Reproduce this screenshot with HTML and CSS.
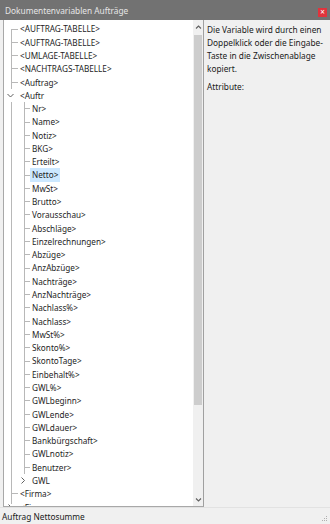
FILE: index.html
```html
<!DOCTYPE html>
<html lang="de">
<head>
<meta charset="utf-8">
<link rel="stylesheet" href="styles.css">
</head>
<body>
<div class="window">
  <div class="titlebar">
    <span class="title">Dokumentenvariablen Aufträge</span>
    <span class="close">×</span>
  </div>
  <div class="main">
    <div class="treepane">
      <div class="tree">
        <div class="row"><span class="g a f"></span><span class="txt top">&lt;AUFTRAG-TABELLE&gt;</span></div>
        <div class="row"><span class="g a t"></span><span class="txt top">&lt;AUFTRAG-TABELLE&gt;</span></div>
        <div class="row"><span class="g a t"></span><span class="txt top">&lt;UMLAGE-TABELLE&gt;</span></div>
        <div class="row"><span class="g a t"></span><span class="txt top">&lt;NACHTRAGS-TABELLE&gt;</span></div>
        <div class="row"><span class="g a t"></span><span class="txt top">&lt;Auftrag&gt;</span></div>
        <div class="row"><span class="g a open"><svg width="14" height="13" viewBox="0 0 14 13"><polyline points="3.5,5 6.5,8 9.5,5" fill="none" stroke="#606060" stroke-width="1"/></svg></span><span class="txt top">&lt;Auftr</span></div>
        <div class="row"><span class="g a v"></span><span class="g b f"></span><span class="txt">Nr&gt;</span></div>
        <div class="row"><span class="g a v"></span><span class="g b t"></span><span class="txt">Name&gt;</span></div>
        <div class="row"><span class="g a v"></span><span class="g b t"></span><span class="txt">Notiz&gt;</span></div>
        <div class="row"><span class="g a v"></span><span class="g b t"></span><span class="txt">BKG&gt;</span></div>
        <div class="row"><span class="g a v"></span><span class="g b t"></span><span class="txt">Erteilt&gt;</span></div>
        <div class="row"><span class="g a v"></span><span class="g b t"></span><span class="txt sel">Netto&gt;</span></div>
        <div class="row"><span class="g a v"></span><span class="g b t"></span><span class="txt">MwSt&gt;</span></div>
        <div class="row"><span class="g a v"></span><span class="g b t"></span><span class="txt">Brutto&gt;</span></div>
        <div class="row"><span class="g a v"></span><span class="g b t"></span><span class="txt">Vorausschau&gt;</span></div>
        <div class="row"><span class="g a v"></span><span class="g b t"></span><span class="txt">Abschläge&gt;</span></div>
        <div class="row"><span class="g a v"></span><span class="g b t"></span><span class="txt">Einzelrechnungen&gt;</span></div>
        <div class="row"><span class="g a v"></span><span class="g b t"></span><span class="txt">Abzüge&gt;</span></div>
        <div class="row"><span class="g a v"></span><span class="g b t"></span><span class="txt">AnzAbzüge&gt;</span></div>
        <div class="row"><span class="g a v"></span><span class="g b t"></span><span class="txt">Nachträge&gt;</span></div>
        <div class="row"><span class="g a v"></span><span class="g b t"></span><span class="txt">AnzNachträge&gt;</span></div>
        <div class="row"><span class="g a v"></span><span class="g b t"></span><span class="txt">Nachlass%&gt;</span></div>
        <div class="row"><span class="g a v"></span><span class="g b t"></span><span class="txt">Nachlass&gt;</span></div>
        <div class="row"><span class="g a v"></span><span class="g b t"></span><span class="txt">MwSt%&gt;</span></div>
        <div class="row"><span class="g a v"></span><span class="g b t"></span><span class="txt">Skonto%&gt;</span></div>
        <div class="row"><span class="g a v"></span><span class="g b t"></span><span class="txt">SkontoTage&gt;</span></div>
        <div class="row"><span class="g a v"></span><span class="g b t"></span><span class="txt">Einbehalt%&gt;</span></div>
        <div class="row"><span class="g a v"></span><span class="g b t"></span><span class="txt">GWL%&gt;</span></div>
        <div class="row"><span class="g a v"></span><span class="g b t"></span><span class="txt">GWLbeginn&gt;</span></div>
        <div class="row"><span class="g a v"></span><span class="g b t"></span><span class="txt">GWLende&gt;</span></div>
        <div class="row"><span class="g a v"></span><span class="g b t"></span><span class="txt">GWLdauer&gt;</span></div>
        <div class="row"><span class="g a v"></span><span class="g b t"></span><span class="txt">Bankbürgschaft&gt;</span></div>
        <div class="row"><span class="g a v"></span><span class="g b t"></span><span class="txt">GWLnotiz&gt;</span></div>
        <div class="row"><span class="g a v"></span><span class="g b u"></span><span class="txt">Benutzer&gt;</span></div>
        <div class="row"><span class="g a v"></span><span class="g b closed"><svg width="12" height="13" viewBox="0 0 12 13"><polyline points="3.5,3.5 6.5,6.5 3.5,9.5" fill="none" stroke="#606060" stroke-width="1"/></svg></span><span class="txt">GWL</span></div>
        <div class="row"><span class="g a t"></span><span class="txt top">&lt;Firma&gt;</span></div>
        <div class="row"><span class="g a closed"><svg width="14" height="13" viewBox="0 0 14 13"><polyline points="4.5,3.5 7.5,6.5 4.5,9.5" fill="none" stroke="#606060" stroke-width="1"/></svg></span><span class="txt top">&lt;Firma</span></div>
      </div>
      <div class="scrollbar">
        <div class="arrow"><svg width="9" height="9" viewBox="0 0 9 9"><polyline points="2,5.5 4.5,3 7,5.5" fill="none" stroke="#606060" stroke-width="1.1"/></svg></div>
        <div class="track"><div class="thumb"></div></div>
        <div class="arrow"><svg width="9" height="9" viewBox="0 0 9 9"><polyline points="2,3.5 4.5,6 7,3.5" fill="none" stroke="#606060" stroke-width="1.1"/></svg></div>
      </div>
    </div>
    <div class="info">
      <p class="desc">Die Variable wird durch einen Doppelklick oder die Eingabe-Taste in die Zwischenablage kopiert.</p>
      <p class="attr">Attribute:</p>
    </div>
  </div>
  <div class="status">
    <span class="status-text">Auftrag Nettosumme</span>
    <span class="grip"><svg width="6" height="6" viewBox="0 0 6 6"><rect x="4" y="0" width="1" height="1" fill="#b0b0b0"/><rect x="4" y="2" width="1" height="1" fill="#b0b0b0"/><rect x="2" y="2" width="1" height="1" fill="#b0b0b0"/><rect x="4" y="4" width="1" height="1" fill="#b0b0b0"/><rect x="2" y="4" width="1" height="1" fill="#b0b0b0"/><rect x="0" y="4" width="1" height="1" fill="#b0b0b0"/></svg></span>
  </div>
</div>
</body>
</html>
```

FILE: styles.css
```css
html, body {
  margin: 0;
  padding: 0;
}
body {
  width: 330px;
  height: 524px;
  overflow: hidden;
  background: #f0f0f0;
  font-family: "Noto Sans", "Open Sans", "Liberation Sans", sans-serif;
  font-size: 8.2px;
  color: #1a1a1a;
}
.window {
  display: flex;
  flex-direction: column;
  height: 524px;
}
.titlebar {
  height: 20px;
  background: #727272;
  display: flex;
  align-items: center;
  justify-content: space-between;
  padding: 0 3px 0 5px;
  flex: none;
}
.title {
  color: #e6e6e6;
  font-size: 8.3px;
}
.close {
  width: 9px;
  height: 9px;
  background: #e0333c;
  color: #fff;
  font-size: 8px;
  line-height: 8px;
  text-align: center;
  margin-top: 4px;
}
.main {
  display: flex;
  height: 487px;
  flex: none;
}
.treepane {
  margin-left: 3px;
  width: 199px;
  display: flex;
  background: #fff;
  border-left: 1px solid #a8a8a8;
  border-bottom: 1px solid #a8a8a8;
  border-right: 1px solid #a0a0a0;
  overflow: hidden;
}
.tree {
  flex: 1;
  padding-top: 2.4px;
  overflow: hidden;
}
.row {
  display: flex;
  height: 13.29px;
  line-height: 13.29px;
  white-space: nowrap;
}
.g {
  flex: none;
  height: 13.29px;
  display: flex;
  align-items: center;
}
.g.a { width: 14px; }
.g.b { width: 12px; }
.g svg { display: block; }
.a.v { background: linear-gradient(#b8b8b8, #b8b8b8) 7px 0 / 1px 100% no-repeat; }
.a.t {
  background:
    linear-gradient(#b8b8b8, #b8b8b8) 7px 0 / 1px 100% no-repeat,
    linear-gradient(#b8b8b8, #b8b8b8) 7px 50% / 7px 1px no-repeat;
}
.a.f {
  background:
    linear-gradient(#b8b8b8, #b8b8b8) 7px 100% / 1px 50% no-repeat,
    linear-gradient(#b8b8b8, #b8b8b8) 7px 50% / 7px 1px no-repeat;
}
.b.f, .b.t {
  background:
    linear-gradient(#b8b8b8, #b8b8b8) 6px 0 / 1px 100% no-repeat,
    linear-gradient(#b8b8b8, #b8b8b8) 6px 50% / 6px 1px no-repeat;
}
.b.u {
  background:
    linear-gradient(#b8b8b8, #b8b8b8) 6px 0 / 1px 100% no-repeat,
    linear-gradient(#b8b8b8, #b8b8b8) 6px 50% / 6px 1px no-repeat;
}
.a.closed {
  background: linear-gradient(#b8b8b8, #b8b8b8) 7px 0 / 1px 3px no-repeat;
}
.txt {
  padding: 0 2px;
  color: #1e1e1e;
}
.txt.top { padding-left: 2px; }
.txt.sel { background: #cce8ff; }
.scrollbar {
  width: 10px;
  flex: none;
  background: #f0f0f0;
  display: flex;
  flex-direction: column;
}
.arrow {
  height: 14px;
  display: flex;
  align-items: center;
  justify-content: center;
  flex: none;
}
.track {
  flex: 1;
  padding: 1px 1px;
}
.thumb {
  height: 370px;
  background: #cdcdcd;
}
.info {
  flex: 1;
  padding: 3px 4px 0 3px;
}
.info p {
  margin: 0;
  line-height: 13px;
  font-size: 8.3px;
  color: #1a1a1a;
}
.info .attr {
  margin-top: 5px;
}
.status {
  flex: 1;
  display: flex;
  align-items: center;
  justify-content: space-between;
  padding: 0 2px 0 2px;
  border-top: 1px solid #e2e2e2;
}
.status-text {
  font-size: 8.3px;
  color: #1a1a1a;
}
.grip {
  align-self: flex-end;
  margin-bottom: 2px;
  display: flex;
}
```
